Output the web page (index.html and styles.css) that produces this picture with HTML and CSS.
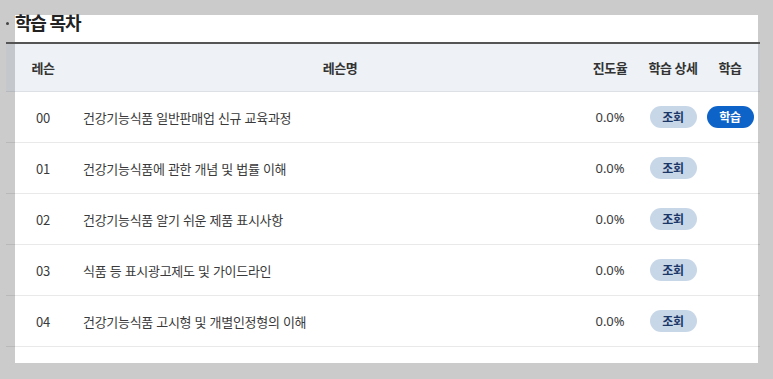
FILE: index.html
```html
<!DOCTYPE html>
<html lang="ko">
<head>
<meta charset="utf-8">
<title>학습 목차</title>
<link rel="stylesheet" href="styles.css">
</head>
<body>
<div class="panel">
  <div class="toc">
    <h2 class="title"><span class="dot"></span>학습 목차</h2>
    <div class="table">
      <div class="row head">
        <div class="c c1">레슨</div>
        <div class="c c2 hname">레슨명</div>
        <div class="c c3">진도율</div>
        <div class="c c4">학습 상세</div>
        <div class="c c5">학습</div>
      </div>
      <div class="row">
        <div class="c c1">00</div>
        <div class="c c2">건강기능식품 일반판매업 신규 교육과정</div>
        <div class="c c3">0.0%</div>
        <div class="c c4"><button class="btn view">조회</button></div>
        <div class="c c5"><button class="btn study">학습</button></div>
      </div>
      <div class="row">
        <div class="c c1">01</div>
        <div class="c c2">건강기능식품에 관한 개념 및 법률 이해</div>
        <div class="c c3">0.0%</div>
        <div class="c c4"><button class="btn view">조회</button></div>
        <div class="c c5"></div>
      </div>
      <div class="row">
        <div class="c c1">02</div>
        <div class="c c2">건강기능식품 알기 쉬운 제품 표시사항</div>
        <div class="c c3">0.0%</div>
        <div class="c c4"><button class="btn view">조회</button></div>
        <div class="c c5"></div>
      </div>
      <div class="row">
        <div class="c c1">03</div>
        <div class="c c2">식품 등 표시광고제도 및 가이드라인</div>
        <div class="c c3">0.0%</div>
        <div class="c c4"><button class="btn view">조회</button></div>
        <div class="c c5"></div>
      </div>
      <div class="row">
        <div class="c c1">04</div>
        <div class="c c2">건강기능식품 고시형 및 개별인정형의 이해</div>
        <div class="c c3">0.0%</div>
        <div class="c c4"><button class="btn view">조회</button></div>
        <div class="c c5"></div>
      </div>
    </div>
  </div>
</div>
</body>
</html>
```

FILE: styles.css
```css
html, body {
  margin: 0;
  padding: 0;
}
body {
  background: #cbcbcb;
  font-family: "Noto Sans CJK KR", "Noto Sans", sans-serif;
  color: #333;
  overflow: hidden;
  height: 379px;
}
.panel {
  display: flow-root;
  margin: 15px 0 0 15px;
  width: 743px;
  height: 348px;
  background: #fff;
}
.toc {
  margin: -6px 0 0 -9px;
  width: 754px;
}
.title {
  margin: 0;
  padding: 0 0 7px 0;
  height: 26px;
  line-height: 26px;
  font-size: 18px;
  font-weight: 700;
  color: #222;
  letter-spacing: -1.2px;
  display: flex;
  align-items: center;
}
.dot {
  width: 3px;
  height: 3px;
  border-radius: 50%;
  background: #444;
  margin: 2px 6px 0 0;
}
.table {
  border-top: 2px solid #555;
}
.row {
  display: grid;
  grid-template-columns: 74px 1fr 60px 66px 48px;
  padding-right: 6px;
  height: 50px;
  border-bottom: 1px solid rgba(0, 0, 0, 0.085);
  align-items: center;
  font-size: 13px;
  letter-spacing: -0.3px;
  color: #3a3a3a;
}
.row.head {
  height: 47px;
  background: rgba(170, 190, 210, 0.2);
  border-bottom: 1px solid rgba(0, 0, 0, 0.07);
  font-weight: 700;
  color: #333;
  letter-spacing: -0.5px;
}
.c {
  text-align: center;
  display: flex;
  justify-content: center;
  align-items: center;
}
.c2 {
  justify-content: flex-start;
  padding-left: 3px;
}
.head .hname {
  justify-content: center;
  padding-left: 20px;
}
.c3 {
  font-family: "Noto Sans", sans-serif;
  letter-spacing: -0.1px;
}
.head .c3 {
  font-family: "Noto Sans CJK KR", sans-serif;
  letter-spacing: -0.5px;
}
.btn {
  border: 0;
  width: 47px;
  height: 22px;
  border-radius: 11px;
  font-family: "Noto Sans CJK KR", sans-serif;
  font-size: 12px;
  font-weight: 700;
  letter-spacing: -0.3px;
  padding: 0;
  line-height: 22px;
  cursor: pointer;
}
.view {
  background: #c8d7e8;
  color: #1b3768;
}
.study {
  background: #0e63c8;
  color: #fff;
}
```
